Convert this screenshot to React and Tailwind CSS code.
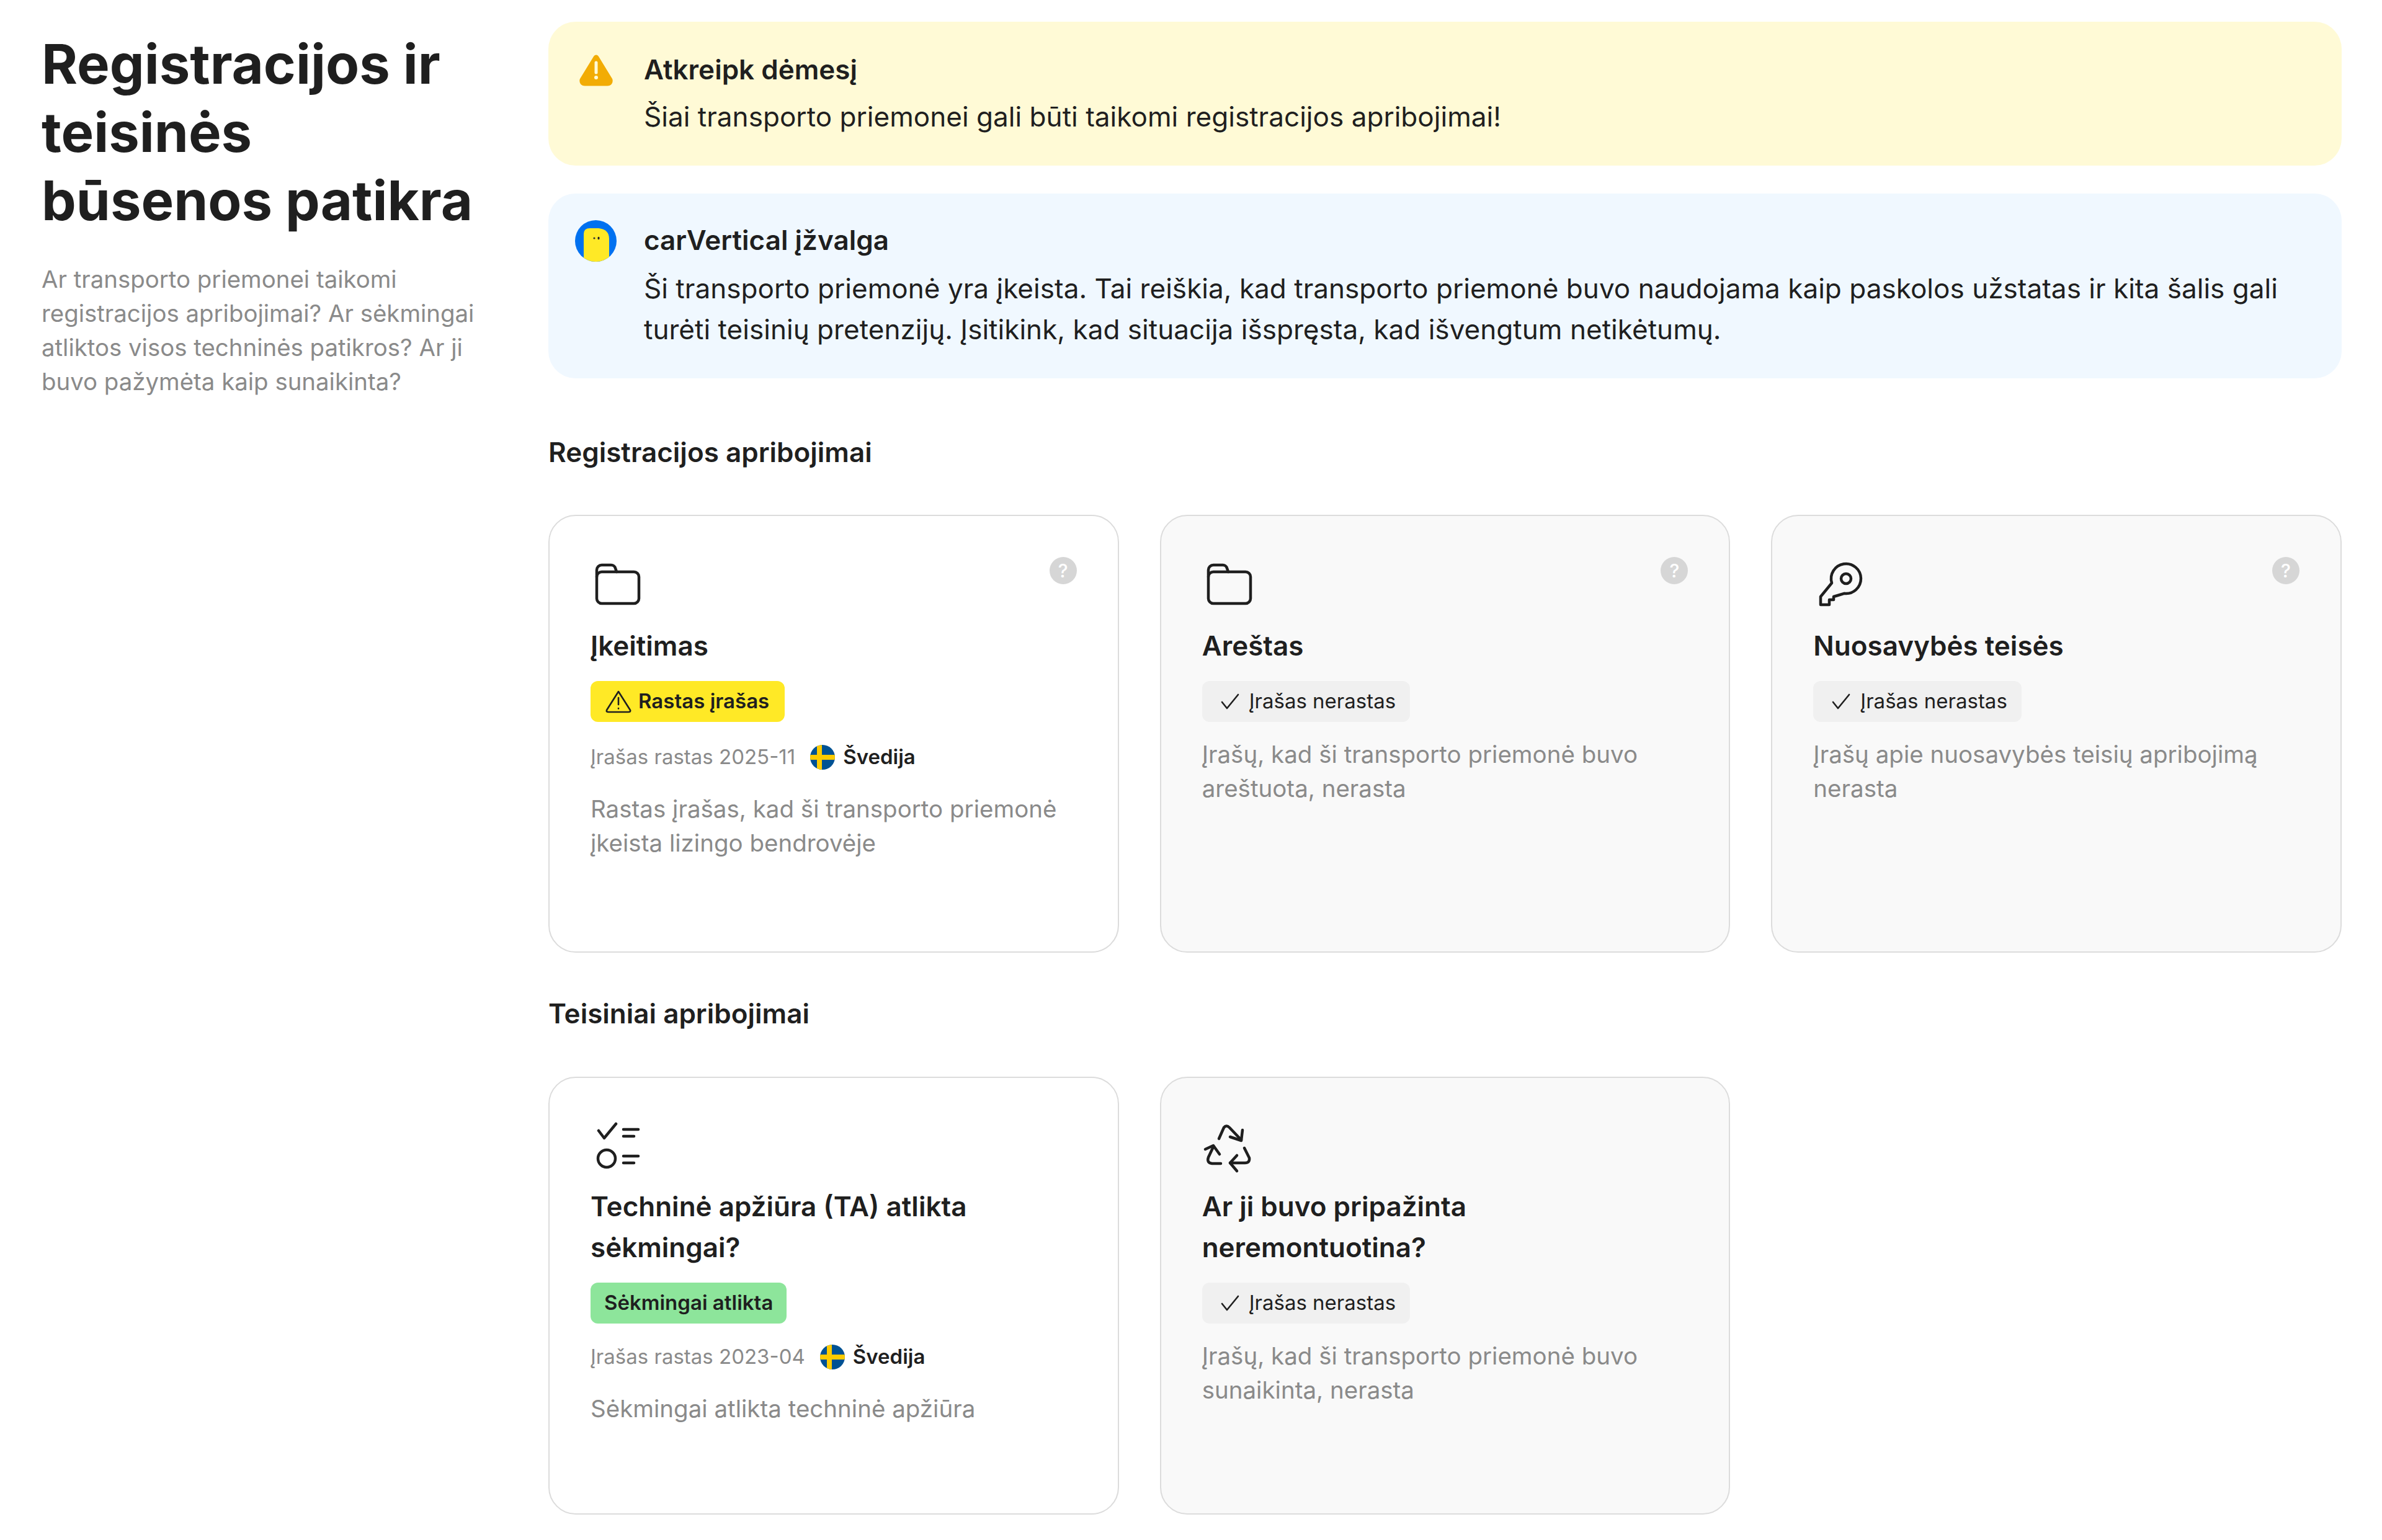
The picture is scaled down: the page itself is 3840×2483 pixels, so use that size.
import React from "react";

const FolderIcon = () => (
  <svg width="84" height="84" viewBox="0 0 84 84" fill="none" stroke="#1f1f1f" strokeWidth="4.5" strokeLinejoin="round" strokeLinecap="round">
    <rect x="10" y="22" width="68" height="51" rx="8" />
    <path d="M10 30 V19 a8 8 0 0 1 8 -8 H33 a7 7 0 0 1 7 5 l2 6" />
  </svg>
);

const KeyIcon = () => (
  <svg width="84" height="84" viewBox="0 0 84 84" fill="none" stroke="#1f1f1f" strokeWidth="4.5" strokeLinejoin="round" strokeLinecap="round">
    <path d="M30 40 L12 62 V75 H26 V67 H33 V62 L43 59 L50 56.8 A24 24 0 1 0 30 40 Z" />
    <circle cx="53" cy="33" r="8" />
  </svg>
);

const ChecklistIcon = () => (
  <svg width="84" height="84" viewBox="0 0 84 84" fill="none" stroke="#1f1f1f" strokeWidth="4.5" strokeLinecap="round" strokeLinejoin="round">
    <path d="M13 14 L22 26 L41 3" />
    <path d="M53 12 H77" />
    <path d="M53 23 H70" />
    <circle cx="26" cy="59" r="14" />
    <path d="M53 55 H77" />
    <path d="M53 66 H70" />
  </svg>
);

const RecycleIcon = () => (
  <svg width="84" height="84" viewBox="0 0 84 84" fill="none" stroke="#1f1f1f" strokeWidth="4.5" strokeLinecap="round" strokeLinejoin="round">
    <path d="M27 27 L35 9 Q39 4 44 9 L63 29" />
    <path d="M45 24 L63 30 L65 13" />
    <path d="M30 67 H16 Q7 66 10 57 L18 40" />
    <path d="M5 44 L18 38 L28 52" />
    <path d="M68 42 L76 58 Q77 66 69 66 H45" />
    <path d="M56 54 L45 66 L56 79" />
  </svg>
);

const HelpDot = () => (
  <span className="flex h-[44px] w-[44px] items-center justify-center rounded-full bg-[#d6d6d6] text-[30px] font-medium leading-none text-white">?</span>
);

const SwedenFlag = () => (
  <svg width="40" height="42" viewBox="0 0 40 42" className="shrink-0">
    <defs>
      <clipPath id="se-flag"><circle cx="20" cy="21" r="20" /></clipPath>
    </defs>
    <g clipPath="url(#se-flag)">
      <rect width="40" height="42" fill="#005293" />
      <rect x="11" width="8" height="42" fill="#fecb00" />
      <rect y="17" width="40" height="8" fill="#fecb00" />
    </g>
  </svg>
);

const NotFoundBadge = () => (
  <div className="flex h-[66px] w-fit items-center gap-[15px] rounded-[12px] bg-[#f0f0f0] pl-[29px] pr-[23px] text-[33px] text-[#1f1f1f]">
    <svg width="32" height="28" viewBox="0 0 32 28" fill="none" stroke="#1f1f1f" strokeWidth="2.6" strokeLinecap="round" strokeLinejoin="round">
      <path d="M3 15 L11 25 L29 3" />
    </svg>
    <span>Įrašas nerastas</span>
  </div>
);

function RecordLine({ date, className }) {
  return (
    <div className={`${className} flex h-[42px] items-center text-[33px]`}>
      <span className="text-[#8a8a8a]">Įrašas rastas {date}</span>
      <span className="ml-[24px]"><SwedenFlag /></span>
      <span className="ml-[13px] font-semibold text-[#1f1f1f]">Švedija</span>
    </div>
  );
}

function Card({ icon, title, children, text, muted, help = true }) {
  return (
    <div className={`h-[706px] rounded-[44px] border-2 border-[#dcdcdc] px-[66px] pt-[66px] ${muted ? "bg-[#f9f9f9]" : "bg-white"}`}>
      <div className={`flex items-start justify-between ${help ? "h-[110px]" : "h-[108px]"}`}>
        <div className={help ? "mt-[2px]" : "mt-[5px]"}>{icon}</div>
        {help && <HelpDot />}
      </div>
      <h3 className="text-[44px] font-semibold leading-[66px] text-[#1f1f1f]">{title}</h3>
      <div className="mt-[24px]">{children}</div>
      <p className={`${muted ? "mt-[25px]" : "mt-[35px]"} text-[38.5px] leading-[55px] text-[#8a8a8a]`}>{text}</p>
    </div>
  );
}

export default function App() {
  return (
    <div className="flex min-h-screen bg-white pb-[42px] pl-[67px] pr-[65px] pt-[35px] font-['Inter',sans-serif]">
      {/* left column */}
      <div className="w-[708px] shrink-0 pt-[13px]">
        <h1 className="text-[88.5px] font-bold leading-[110px] text-[#1f1f1f]">Registracijos ir teisinės būsenos patikra</h1>
        <p className="mt-[45px] text-[38.4px] leading-[55px] text-[#8a8a8a]">
          Ar transporto priemonei taikomi registracijos apribojimai? Ar sėkmingai atliktos visos techninės patikros? Ar ji buvo pažymėta kaip sunaikinta?
        </p>
      </div>

      {/* right column */}
      <div className="ml-[109px] flex-1">
        <div className="flex rounded-[44px] bg-[#fffad6] pb-[46px] pl-[50px] pr-[50px] pt-[44px]">
          <div className="w-[104px] shrink-0 pt-[9px]">
            <svg width="54" height="51" viewBox="0 0 54 51">
              <path d="M27 5 L49 41 Q50 46 45 46 H9 Q4 46 5 41 Z" fill="#f2ac05" stroke="#f2ac05" strokeWidth="9" strokeLinejoin="round" />
              <path d="M27 13 V29" stroke="#fffad6" strokeWidth="5" strokeLinecap="round" />
              <circle cx="27" cy="37" r="3" fill="#fffad6" />
            </svg>
          </div>
          <div>
            <div className="text-[44px] font-semibold leading-[66px] text-[#1f1f1f]">Atkreipk dėmesį</div>
            <div className="mt-[10px] text-[44.1px] leading-[66px] text-[#1f1f1f]">Šiai transporto priemonei gali būti taikomi registracijos apribojimai!</div>
          </div>
        </div>

        <div className="mt-[45px] flex rounded-[44px] bg-[#f0f8ff] pb-[46px] pl-[43px] pr-[50px] pt-[42px]">
          <div className="w-[111px] shrink-0 pt-[1px]">
            <svg width="67" height="67" viewBox="0 0 67 67">
              <defs>
                <clipPath id="cv-logo"><circle cx="33.5" cy="33.5" r="33.5" /></clipPath>
              </defs>
              <g clipPath="url(#cv-logo)">
                <rect width="67" height="67" fill="#0071f0" />
                <path d="M14 67 V22 Q14 13 24 13 H38 Q55 15 55 30 V67 Z" fill="#ffe926" />
                <circle cx="31" cy="29" r="1.6" fill="#333" />
                <ellipse cx="38" cy="29" rx="1.6" ry="2.2" fill="#222" />
              </g>
            </svg>
          </div>
          <div>
            <div className="text-[44px] font-semibold leading-[66px] text-[#1f1f1f]">carVertical įžvalga</div>
            <div className="mt-[12px] text-[44.1px] leading-[66px] text-[#1f1f1f]">
              Ši transporto priemonė yra įkeista. Tai reiškia, kad transporto priemonė buvo naudojama kaip paskolos užstatas ir kita šalis gali turėti teisinių pretenzijų. Įsitikink, kad situacija išspręsta, kad išvengtum netikėtumų.
            </div>
          </div>
        </div>

        <h2 className="mt-[86px] text-[44px] font-semibold leading-[66px] text-[#1f1f1f]">Registracijos apribojimai</h2>
        <div className="mt-[68px] grid grid-cols-3 gap-[66px]">
          <Card
            icon={<FolderIcon />}
            title="Įkeitimas"
            text="Rastas įrašas, kad ši transporto priemonė įkeista lizingo bendrovėje"
          >
            <div className="flex h-[66px] w-fit items-center gap-[10px] rounded-[12px] bg-[#ffe926] pl-[23px] pr-[25px] text-[33px] font-semibold text-[#1f1f1f]">
              <svg width="44" height="38" viewBox="0 0 44 38" fill="none" stroke="#1f1f1f" strokeWidth="2.6" strokeLinejoin="round" strokeLinecap="round">
                <path d="M22 3 L41 33 Q42 36 38 36 H6 Q2 36 3 33 Z" />
                <path d="M22 13 V24" />
                <path d="M22 30 V30.5" />
              </svg>
              <span>Rastas įrašas</span>
            </div>
            <RecordLine date="2025-11" className="mt-[36px]" />
          </Card>
          <Card muted icon={<FolderIcon />} title="Areštas" text="Įrašų, kad ši transporto priemonė buvo areštuota, nerasta">
            <NotFoundBadge />
          </Card>
          <Card muted icon={<KeyIcon />} title="Nuosavybės teisės" text="Įrašų apie nuosavybės teisių apribojimą nerasta">
            <NotFoundBadge />
          </Card>
        </div>

        <h2 className="mt-[65px] text-[44px] font-semibold leading-[66px] text-[#1f1f1f]">Teisiniai apribojimai</h2>
        <div className="mt-[69px] grid grid-cols-3 gap-[66px]">
          <Card
            help={false}
            icon={<ChecklistIcon />}
            title="Techninė apžiūra (TA) atlikta sėkmingai?"
            text="Sėkmingai atlikta techninė apžiūra"
          >
            <div className="flex h-[66px] w-fit items-center rounded-[12px] bg-[#8de59b] px-[22px] text-[33px] font-semibold text-[#1f1f1f]">
              Sėkmingai atlikta
            </div>
            <RecordLine date="2023-04" className="mt-[33px]" />
          </Card>
          <Card help={false} muted icon={<RecycleIcon />} title="Ar ji buvo pripažinta neremontuotina?" text="Įrašų, kad ši transporto priemonė buvo sunaikinta, nerasta">
            <NotFoundBadge />
          </Card>
        </div>
      </div>
    </div>
  );
}
